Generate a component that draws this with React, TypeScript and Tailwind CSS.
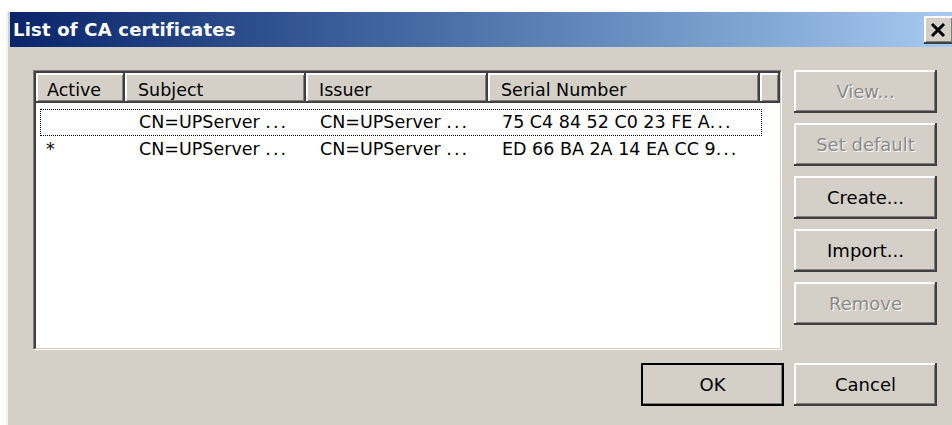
import React from 'react';

type Cert = { active: boolean; subject: string; issuer: string; serial: string };

const certs: Cert[] = [
  { active: false, subject: 'CN=UPServer', issuer: 'CN=UPServer', serial: '75 C4 84 52 C0 23 FE A' },
  { active: true, subject: 'CN=UPServer', issuer: 'CN=UPServer', serial: 'ED 66 BA 2A 14 EA CC 9' },
];

const columns = [
  { label: 'Active', width: 'w-[89px]', pad: 'pl-[11px]' },
  { label: 'Subject', width: 'w-[181px]', pad: 'pl-[13px]' },
  { label: 'Issuer', width: 'w-[182px]', pad: 'pl-[13px]' },
  { label: 'Serial Number', width: 'w-[272px]', pad: 'pl-[13px]' },
];

// classic raised 3D bevel used by buttons
const raised =
  'bg-[#d4d0c8] shadow-[inset_-2px_-2px_0_#404040,inset_2px_2px_0_#ffffff,inset_-3px_-3px_0_#808080]';

function Button({ label, disabled, isDefault }: { label: string; disabled?: boolean; isDefault?: boolean }) {
  return (
    <button
      className={`h-[43px] w-[143px] text-[18px] ${raised} ${
        isDefault ? 'outline-2 -outline-offset-2 outline-black' : ''
      } ${disabled ? 'text-[#8a8a8a] [text-shadow:1px_1px_0_#ffffff]' : 'text-black'}`}
    >
      {label}
    </button>
  );
}

// truncated cell text with the wide-spaced ellipsis
function Clipped({ text, space }: { text: string; space?: boolean }) {
  return (
    <span className="whitespace-pre">
      {text}
      {space ? ' ' : ''}
      <span className="tracking-[2px]">...</span>
    </span>
  );
}

export default function App() {
  return (
    <div
      className="w-[952px] h-[425px] bg-white pt-[12px] pl-[6px] overflow-hidden"
      style={{ fontFamily: '"DejaVu Sans", "Liberation Sans", sans-serif' }}
    >
      <div className="h-full bg-[#d4d0c8] border-l-[2px] border-l-[#f4f2ee] pl-[2px] flex flex-col">
        {/* caption bar */}
        <div className="h-[35px] flex items-center justify-between bg-gradient-to-r from-[#0a246a] to-[#a6caf0] pl-[3px]">
          <span className="text-white font-bold text-[18px] tracking-[0.2px]">List of CA certificates</span>
          <div className={`w-[30px] h-[28px] mr-[-2px] flex items-center justify-center ${raised}`}>
            <svg width="16" height="14" viewBox="0 0 16 14" className="-ml-[2px]">
              <path d="M2 1 L14 13 M14 1 L2 13" stroke="black" strokeWidth="3" />
            </svg>
          </div>
        </div>

        <div className="flex pl-[23px] pt-[23px]">
          {/* list view, sunken frame */}
          <div className="w-[749px] h-[280px] border-l border-t border-[#808080] border-r-white border-b-white border-r border-b">
            <div className="h-full bg-white border-l-2 border-t-2 border-[#404040] border-r border-b border-r-[#d4d0c8] border-b-[#d4d0c8] flex flex-col text-[17.5px] text-black">
              <div className="flex h-[30px] shrink-0">
                {columns.map((c) => (
                  <div
                    key={c.label}
                    className={`${c.width} ${c.pad} h-full flex items-center pt-[5px] ${raised}`}
                  >
                    {c.label}
                  </div>
                ))}
                <div className={`flex-1 h-full ${raised}`} />
              </div>
              <div className="pt-[6px]">
                {certs.map((c, i) => (
                  <div
                    key={i}
                    className={`flex h-[27px] items-center w-[722px] ml-[4px] ${
                      i === 0 ? 'border border-dotted border-black' : 'border border-transparent'
                    }`}
                  >
                    <div className="w-[85px] pl-[5px]">{c.active ? '*' : ''}</div>
                    <div className="w-[181px] pl-[13px]">
                      <Clipped text={c.subject} space />
                    </div>
                    <div className="w-[182px] pl-[13px]">
                      <Clipped text={c.issuer} space />
                    </div>
                    <div className="flex-1 pl-[13px]">
                      <Clipped text={c.serial} />
                    </div>
                  </div>
                ))}
              </div>
            </div>
          </div>

          <div className="ml-[12px] flex flex-col gap-[10px]">
            <Button label="View..." disabled />
            <Button label="Set default" disabled />
            <Button label="Create..." />
            <Button label="Import..." />
            <Button label="Remove" disabled />
          </div>
        </div>

        <div className="flex justify-end gap-[11px] mt-[13px] w-[927px]">
          <div className="w-[142px]">
            <Button label="OK" isDefault />
          </div>
          <Button label="Cancel" />
        </div>
      </div>
    </div>
  );
}
